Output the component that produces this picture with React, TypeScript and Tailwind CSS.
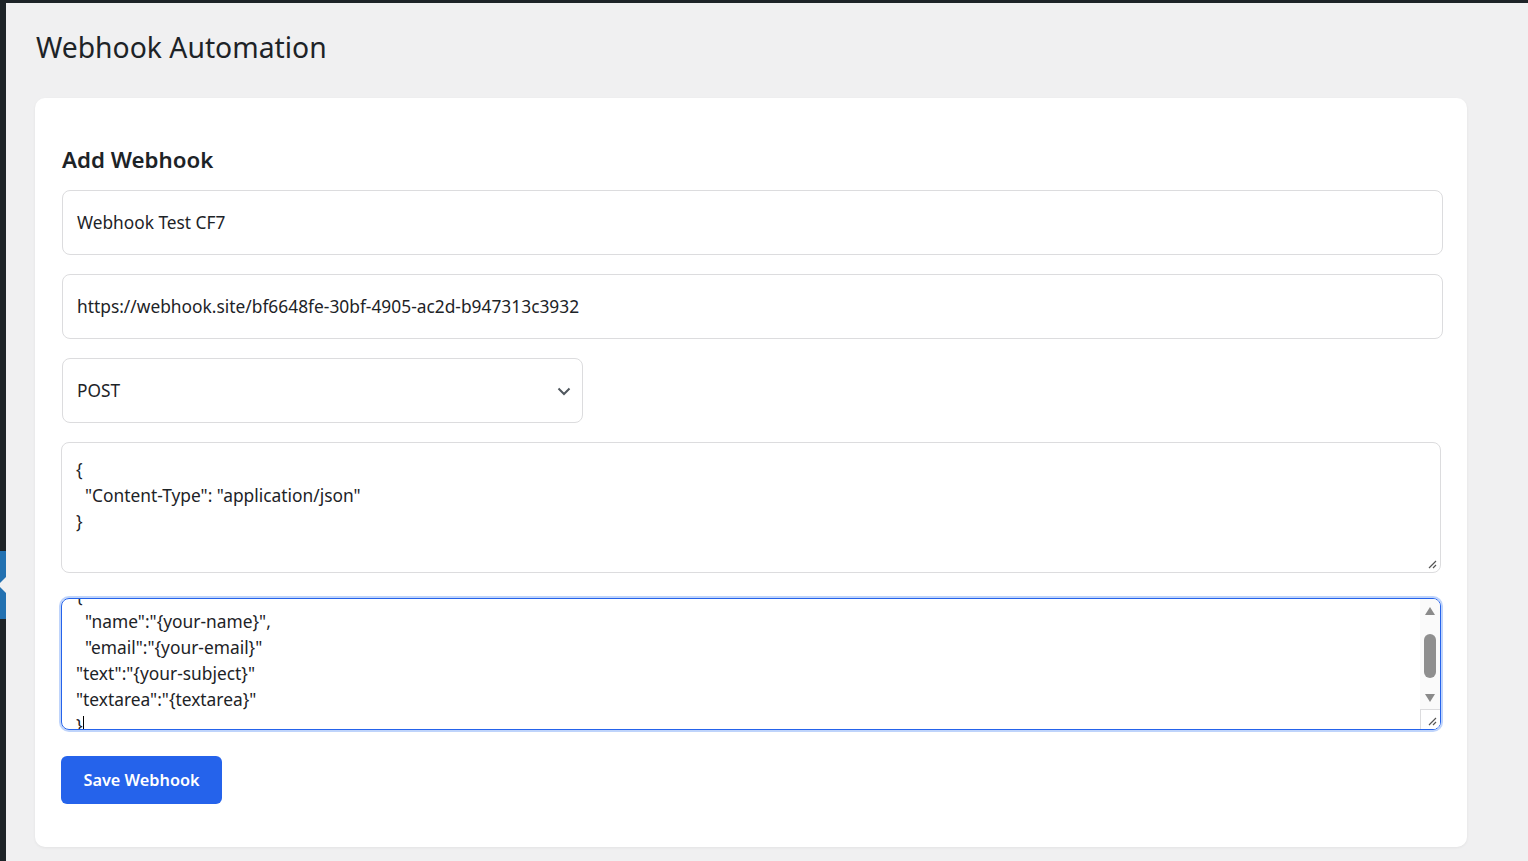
import React from "react";

const font = { fontFamily: '"Noto Sans", "Open Sans", sans-serif' };

function Grip() {
  return (
    <svg width="10" height="10" viewBox="0 0 10 10" className="absolute bottom-[3px] right-[3px]">
      <path d="M9 2 L2 9 M9 6 L6 9" stroke="#555" strokeWidth="1.2" fill="none" />
    </svg>
  );
}

export default function App() {
  return (
    <div className="h-[861px] w-[1528px] overflow-hidden bg-[#f0f0f1] flex flex-col text-[#1d2327]" style={font}>
      <div className="h-[3px] bg-[#1d2327] shrink-0" />
      <div className="flex flex-1 min-h-0">
        <aside className="w-[6px] shrink-0 bg-[#1d2327] flex flex-col">
          <div className="h-[548px] shrink-0" />
          <div className="h-[68px] shrink-0 bg-[#2271b1] relative overflow-hidden">
            <div className="absolute right-0 top-[26px] w-0 h-0 border-y-[8px] border-y-transparent border-r-[8px] border-r-[#f0f0f1]" />
          </div>
        </aside>
        <main className="pl-[29px] flex flex-col">
          <h1 className="mt-[25px] text-[28.3px] leading-[38px] font-normal pl-px">Webhook Automation</h1>
          <div className="mt-[32px] w-[1432px] bg-white rounded-[10px] shadow-[0_1px_3px_rgba(0,0,0,0.06)] px-[26px] pt-[47px] pb-[43px] flex flex-col">
            <h2 className="text-[22.3px] leading-[30px] font-semibold mb-[15px] pl-px">Add Webhook</h2>

            <div className="ml-px w-[1381px] h-[65px] border border-[#dcdcde] rounded-lg px-[14px] flex items-center text-[17.3px]">
              Webhook Test CF7
            </div>
            <div className="mt-[19px] ml-px w-[1381px] h-[65px] border border-[#dcdcde] rounded-lg px-[14px] flex items-center text-[17.35px]">
              https://webhook.site/bf6648fe-30bf-4905-ac2d-b947313c3932
            </div>
            <div className="mt-[19px] ml-px w-[521px] h-[65px] border border-[#dcdcde] rounded-lg pl-[14px] pr-[11px] flex items-center justify-between text-[17.3px]">
              <span>POST</span>
              <svg width="14" height="9" viewBox="0 0 14 9" className="mt-[2px]">
                <path d="M1.5 1.5 L7 7 L12.5 1.5" stroke="#50575e" strokeWidth="2" fill="none" />
              </svg>
            </div>

            <div className="mt-[19px] relative w-[1380px] h-[131px] border border-[#dcdcde] rounded-lg px-[14px] pt-[13px] pb-[11px] text-[17.35px] leading-[26px] whitespace-pre">
              <div>{"{"}</div>
              <div>{'  "Content-Type": "application/json"'}</div>
              <div>{"}"}</div>
              <Grip />
            </div>

            <div className="mt-[25px] relative w-[1380px] h-[132px] border border-[#2563eb] rounded-lg ring-2 ring-[#bfd4fb] overflow-hidden text-[17.35px] leading-[26px] whitespace-pre">
              <div className="px-[14px] -mt-[17px]">
                <div>{"{"}</div>
                <div>{'  "name":"{your-name}",'}</div>
                <div>{'  "email":"{your-email}"'}</div>
                <div>{'"text":"{your-subject}"'}</div>
                <div>{'"textarea":"{textarea}"'}</div>
                <div className="flex items-center">
                  <span>{"}"}</span>
                  <span className="inline-block w-px h-[18px] bg-black" />
                </div>
              </div>
              <div className="absolute right-0 top-0 bottom-0 w-[20px] bg-[#fafafa] flex flex-col items-center">
                <svg width="12" height="10" viewBox="0 0 12 10" className="mt-[7px]">
                  <path d="M6 1 L11 9 L1 9 Z" fill="#8a8a8a" />
                </svg>
                <div className="mt-[18px] w-[12px] h-[44px] rounded-full bg-[#8f8f8f]" />
                <svg width="12" height="10" viewBox="0 0 12 10" className="mt-[15px]">
                  <path d="M1 1 L11 1 L6 9 Z" fill="#8a8a8a" />
                </svg>
                <div className="absolute bottom-0 right-0 w-[20px] h-[20px] bg-white border-l border-t border-[#dcdcde]">
                  <Grip />
                </div>
              </div>
            </div>

            <button className="mt-[26px] w-[161px] h-[48px] bg-[#2563eb] rounded-md text-white text-[16.3px] font-semibold">
              Save Webhook
            </button>
          </div>
        </main>
      </div>
    </div>
  );
}
